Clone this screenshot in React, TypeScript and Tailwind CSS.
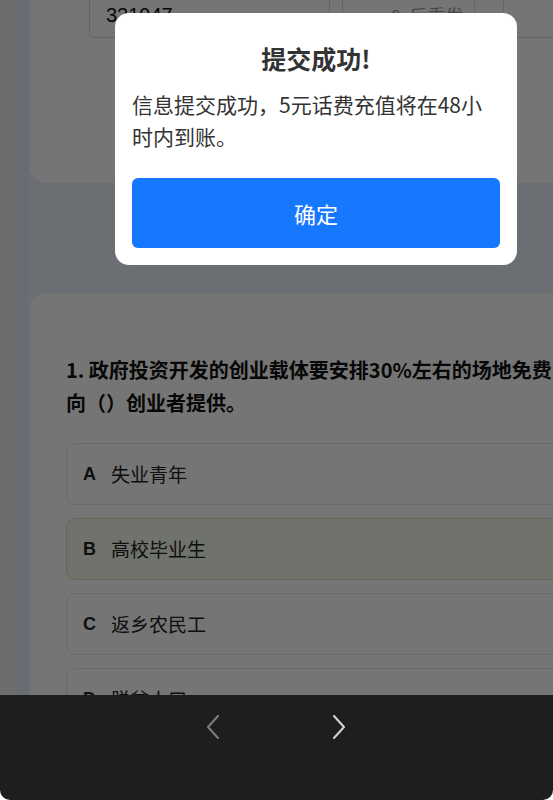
import React from "react";

const font = { fontFamily: '"Noto Sans CJK SC", "Noto Sans", sans-serif' };

function Option({ letter, text, selected }: { letter: string; text: string; selected?: boolean }) {
  return (
    <div
      className={
        "flex items-center h-[62px] rounded-[10px] border pl-[16px] " +
        (selected ? "bg-[#f3fbec] border-[#cde5b8]" : "bg-white border-[#e6e6e6]")
      }
    >
      <span className="w-[28px] text-[18px] font-bold text-[#222] font-['Liberation_Sans',sans-serif]">{letter}</span>
      <span className="text-[19px] text-[#222]">{text}</span>
    </div>
  );
}

export default function App() {
  return (
    <div className="w-[553px] h-[800px] flex flex-col overflow-hidden bg-white" style={font}>
      <div className="relative flex-1 overflow-hidden bg-[#eeeeee]">
        <div className="ml-[15px] w-[640px] h-full flex flex-col border-l-[13px] border-[#e3edfd] bg-[#e9f0fa] pl-[2px]">
          <div className="-mt-[32px] shrink-0 rounded-[16px] bg-white pt-[16px] pb-[145px] pl-[59px] w-[620px]">
            <div className="flex gap-[12px] h-[54px]">
              <div className="w-[241px] h-full rounded-[6px] border border-[#dcdcdc] flex items-center pl-[16px] pt-[8px] text-[20px] text-[#111] font-['Liberation_Sans',sans-serif]">
                321947
              </div>
              <div className="w-[133px] h-full rounded-[6px] border border-[#dcdcdc] flex items-center pl-[48px] pt-[8px] text-[18px] text-[#999]">
                9s后重发
              </div>
              <div className="w-[100px] h-full rounded-[6px] border border-[#dcdcdc] ml-[16px]" />
            </div>
          </div>
          <div className="mt-[110px] shrink-0 rounded-[16px] bg-white pt-[60px] pl-[36px] pr-[30px] w-[620px] h-[500px]">
            <div className="text-[20px] font-bold leading-[33px] text-[#111] w-[495px]">
              1. 政府投资开发的创业载体要安排30%左右的场地免费向（）创业者提供。
            </div>
            <div className="mt-[24px] flex flex-col gap-[13px]">
              <Option letter="A" text="失业青年" />
              <Option letter="B" text="高校毕业生" selected />
              <Option letter="C" text="返乡农民工" />
              <Option letter="D" text="脱贫人口" />
            </div>
          </div>
        </div>

        <div className="absolute inset-0 bg-black/[0.54]" />

        <div className="absolute left-[115px] top-[13px] w-[402px] rounded-[14px] bg-white px-[17px] pt-[26px] pb-[17px]">
          <div className="text-center text-[25px] font-bold leading-[38px] text-[#333]">提交成功!</div>
          <div className="mt-[11px] text-[21px] leading-[32px] text-[#333]">
            信息提交成功，5元话费充值将在48小时内到账。
          </div>
          <button className="mt-[26px] w-full h-[70px] rounded-[6px] bg-[#1677ff] text-white text-[22px] flex items-center justify-center">
            确定
          </button>
        </div>
      </div>

      <div className="h-[105px] bg-[#1e1e1e] rounded-b-[10px] flex items-start">
        <div className="flex pt-[20px] pl-[206px] gap-[112px]">
          <svg width="14" height="24" viewBox="0 0 14 24" fill="none">
            <polyline points="12,1 2,12 12,23" stroke="#7d7d7d" strokeWidth="2" strokeLinecap="round" strokeLinejoin="round" />
          </svg>
          <svg width="14" height="24" viewBox="0 0 14 24" fill="none">
            <polyline points="2,1 12,12 2,23" stroke="#d6d6d6" strokeWidth="2" strokeLinecap="round" strokeLinejoin="round" />
          </svg>
        </div>
      </div>
    </div>
  );
}
